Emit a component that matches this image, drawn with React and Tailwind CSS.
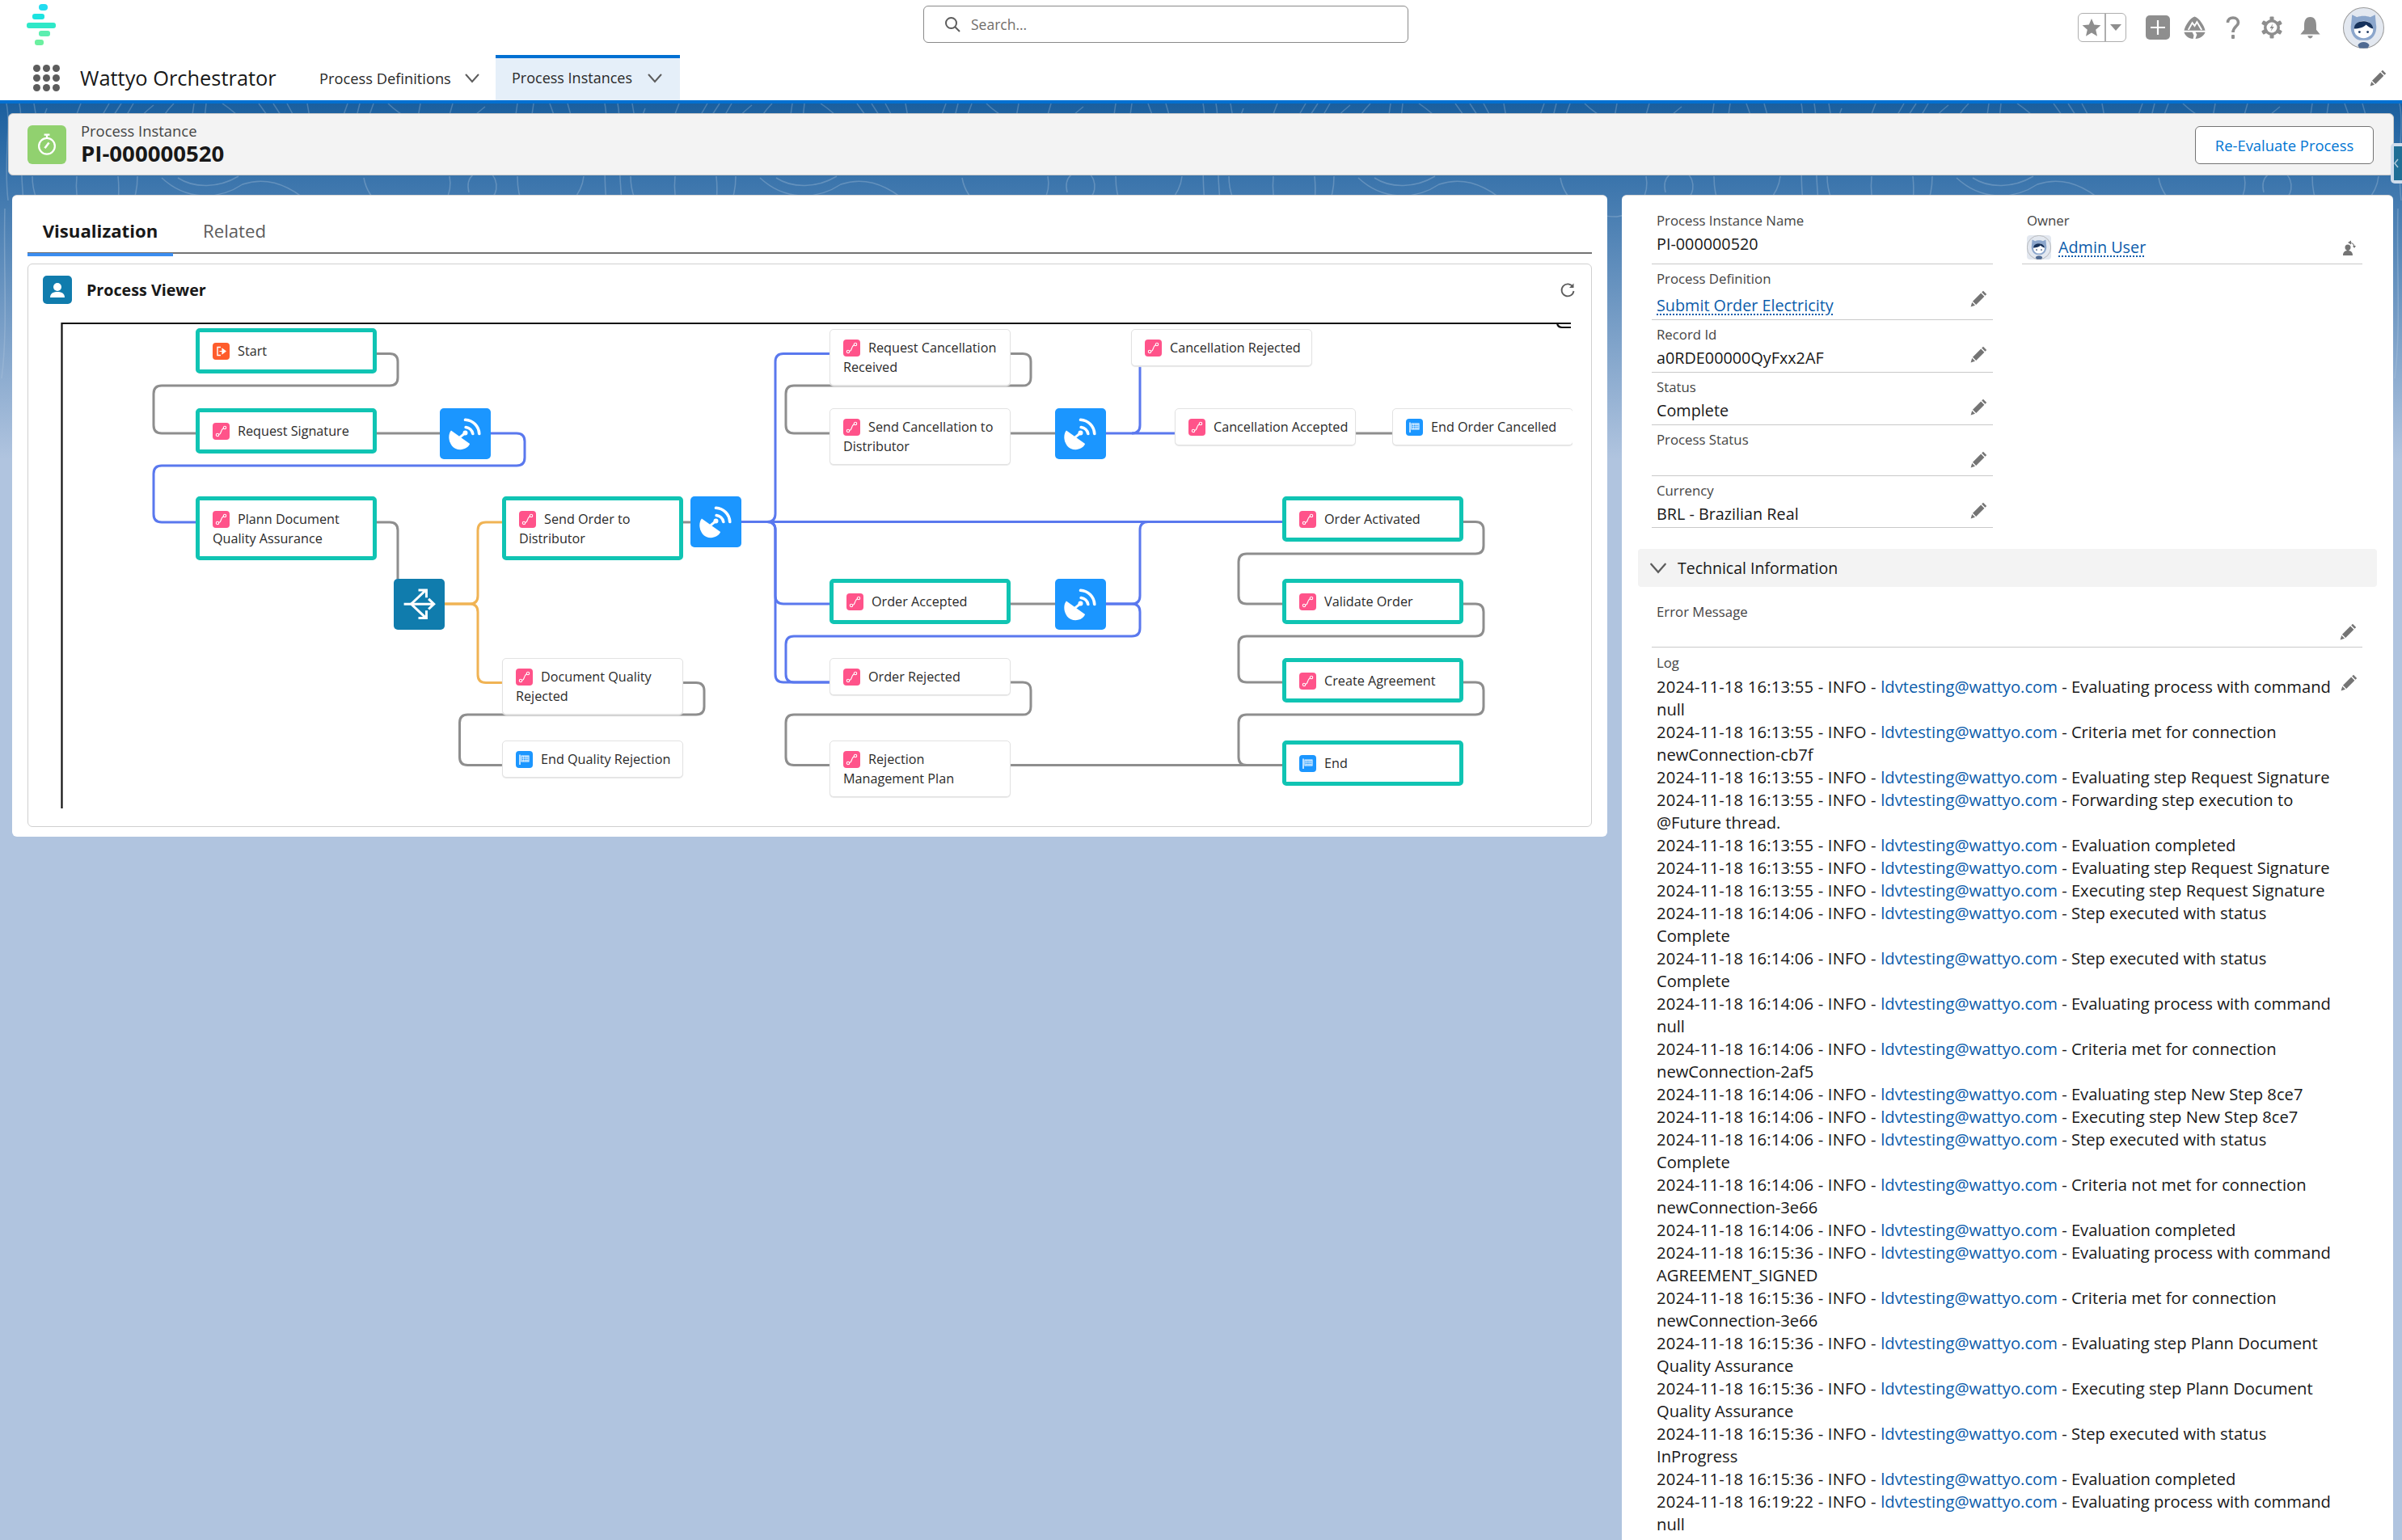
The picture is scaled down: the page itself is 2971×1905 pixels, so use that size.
import React from "react";

const FONT = "font-['Open_Sans','Noto_Sans',sans-serif]";

const nodes = [
  { label: "Start", icon: "start", active: true, cls: "left-[202px] top-[16px] w-[224px] h-[56px]" },
  { label: "Request Signature", icon: "step", active: true, cls: "left-[202px] top-[115px] w-[224px] h-[56px]" },
  { label: "Plann Document\nQuality Assurance", icon: "step", active: true, cls: "left-[202px] top-[224px] w-[224px] h-[79px]" },
  { label: "Send Order to\nDistributor", icon: "step", active: true, cls: "left-[581px] top-[224px] w-[224px] h-[79px]" },
  { label: "Document Quality\nRejected", icon: "step", cls: "left-[581px] top-[424px] w-[224px] h-[70px]" },
  { label: "End Quality Rejection", icon: "end", cls: "left-[581px] top-[526px] w-[224px] h-[46px]" },
  { label: "Request Cancellation\nReceived", icon: "step", cls: "left-[986px] top-[17px] w-[224px] h-[70px]" },
  { label: "Cancellation Rejected", icon: "step", cls: "left-[1359px] top-[17px] w-[224px] h-[46px]" },
  { label: "Send Cancellation to\nDistributor", icon: "step", cls: "left-[986px] top-[115px] w-[224px] h-[70px]" },
  { label: "Cancellation Accepted", icon: "step", cls: "left-[1413px] top-[115px] w-[224px] h-[46px]" },
  { label: "End Order Cancelled", icon: "end", cls: "left-[1682px] top-[115px] w-[224px] h-[46px]" },
  { label: "Order Activated", icon: "step", active: true, cls: "left-[1546px] top-[224px] w-[224px] h-[56px]" },
  { label: "Order Accepted", icon: "step", active: true, cls: "left-[986px] top-[326px] w-[224px] h-[56px]" },
  { label: "Validate Order", icon: "step", active: true, cls: "left-[1546px] top-[326px] w-[224px] h-[56px]" },
  { label: "Order Rejected", icon: "step", cls: "left-[986px] top-[424px] w-[224px] h-[46px]" },
  { label: "Create Agreement", icon: "step", active: true, cls: "left-[1546px] top-[424px] w-[224px] h-[55px]" },
  { label: "Rejection\nManagement Plan", icon: "step", cls: "left-[986px] top-[526px] w-[224px] h-[70px]" },
  { label: "End", icon: "end", active: true, cls: "left-[1546px] top-[526px] w-[224px] h-[56px]" },
];

const satellites = [
  "left-[504px] top-[115px]",
  "left-[814px] top-[224px]",
  "left-[1265px] top-[115px]",
  "left-[1265px] top-[326px]",
];

const gray = [
  "M466 437.5 H482 Q492 437.5 492 447.5 V467 Q492 477 482 477 H200 Q190 477 190 487 V526 Q190 536 200 536 H242",
  "M466 536 H544",
  "M466 646 H482 Q492 646 492 656 V716",
  "M844 646 H854",
  "M844 844.5 H861 Q871 844.5 871 854.5 V874 Q871 884 861 884 H578.5 Q568.5 884 568.5 894 V936.5 Q568.5 946.5 578.5 946.5 H621",
  "M1250 437.5 H1265 Q1275 437.5 1275 447.5 V467 Q1275 477 1265 477 H982 Q972 477 972 487 V526 Q972 536 982 536 H1026",
  "M1250 536 H1305",
  "M1677 536 H1722",
  "M1250 747 H1305",
  "M1250 844 H1265 Q1275 844 1275 854 V874 Q1275 884 1265 884 H982 Q972 884 972 894 V936.5 Q972 946.5 982 946.5 H1026",
  "M1250 946.5 H1586",
  "M1810 645.5 H1825 Q1835 645.5 1835 655.5 V675 Q1835 685 1825 685 H1542 Q1532 685 1532 695 V737 Q1532 747 1542 747 H1586",
  "M1810 747 H1825 Q1835 747 1835 757 V777 Q1835 787 1825 787 H1542 Q1532 787 1532 797 V834 Q1532 844 1542 844 H1586",
  "M1810 844 H1825 Q1835 844 1835 854 V874 Q1835 884 1825 884 H1542 Q1532 884 1532 894 V936.5 Q1532 946.5 1542 946.5 H1586",
];

const blue = [
  "M607 536 H639 Q649 536 649 546 V566 Q649 576 639 576 H200 Q190 576 190 586 V636 Q190 646 200 646 H242",
  "M917 645.5 H1586",
  "M949 645.5 Q959 645.5 959 635.5 V447.5 Q959 437.5 969 437.5 H1026",
  "M949 645.5 Q959 645.5 959 655.5 V737 Q959 747 969 747 H1026",
  "M949 645.5 Q959 645.5 959 655.5 V834 Q959 844 969 844 H1026",
  "M1367 536 H1453",
  "M1400 536 Q1410 536 1410 526 V453",
  "M1367 747 H1400 Q1410 747 1410 737 V655.5 Q1410 645.5 1420 645.5",
  "M1367 747 H1400 Q1410 747 1410 757 V777 Q1410 787 1400 787 H982 Q972 787 972 797 V834 Q972 844 982 844 H1026",
];

const yellow = [
  "M550 747 H581 Q591 747 591 737 V656 Q591 646 601 646 H621",
  "M550 747 H581 Q591 747 591 757 V834.5 Q591 844.5 601 844.5 H621",
];

const logs = [
  ["16:13:55", "Evaluating process with command", "null"],
  ["16:13:55", "Criteria met for connection", "newConnection-cb7f"],
  ["16:13:55", "Evaluating step Request Signature"],
  ["16:13:55", "Forwarding step execution to", "@Future thread."],
  ["16:13:55", "Evaluation completed"],
  ["16:13:55", "Evaluating step Request Signature"],
  ["16:13:55", "Executing step Request Signature"],
  ["16:14:06", "Step executed with status", "Complete"],
  ["16:14:06", "Step executed with status", "Complete"],
  ["16:14:06", "Evaluating process with command", "null"],
  ["16:14:06", "Criteria met for connection", "newConnection-2af5"],
  ["16:14:06", "Evaluating step New Step 8ce7"],
  ["16:14:06", "Executing step New Step 8ce7"],
  ["16:14:06", "Step executed with status", "Complete"],
  ["16:14:06", "Criteria not met for connection", "newConnection-3e66"],
  ["16:14:06", "Evaluation completed"],
  ["16:15:36", "Evaluating process with command", "AGREEMENT_SIGNED"],
  ["16:15:36", "Criteria met for connection", "newConnection-3e66"],
  ["16:15:36", "Evaluating step Plann Document", "Quality Assurance"],
  ["16:15:36", "Executing step Plann Document", "Quality Assurance"],
  ["16:15:36", "Step executed with status", "InProgress"],
  ["16:15:36", "Evaluation completed"],
  ["16:19:22", "Evaluating process with command", "null"],
];

function Pencil({ className = "" }) {
  return (
    <svg viewBox="0 0 21 21" className={`w-[21px] h-[21px] shrink-0 ${className}`}>
      <path d="M16 0.8 L20.2 5 L18.4 6.8 L14.2 2.6 Z M13.2 3.6 L17.4 7.8 L7.2 18 L3 13.8 Z M2.2 15 L6 18.8 L0.6 20.4 Z" fill="#747474" />
    </svg>
  );
}

function Chevron({ className = "", color = "#5c5c5c" }) {
  return (
    <svg viewBox="0 0 18 12" className={`shrink-0 ${className}`}>
      <path d="M1.5 1.5 L9 10 L16.5 1.5" fill="none" stroke={color} strokeWidth="2" strokeLinecap="round" />
    </svg>
  );
}

function SmallIcon({ kind }) {
  if (kind === "start")
    return (
      <span className="inline-block align-[-5px] w-[21px] h-[21px] rounded-[4px] bg-[#fe5c2c] mr-[10px]">
        <svg viewBox="0 0 21 21" className="w-full h-full">
          <path d="M10 5.5 H6 V15.5 H10" fill="none" stroke="#fff" strokeWidth="1.4" />
          <path d="M8.5 10.5 H13 M12 7.5 L16 10.5 L12 13.5 Z" fill="#fff" stroke="#fff" strokeWidth="1.2" />
        </svg>
      </span>
    );
  if (kind === "end")
    return (
      <span className="inline-block align-[-5px] w-[21px] h-[21px] rounded-[4px] bg-[#1b96ff] mr-[10px]">
        <svg viewBox="0 0 21 21" className="w-full h-full">
          <path d="M5 4.5 V17" stroke="#fff" strokeWidth="1.4" />
          <rect x="7" y="6" width="9" height="7" fill="none" stroke="#fff" strokeWidth="1" />
          <path d="M7.5 7.5 H15.5 M7.5 9.5 H15.5 M7.5 11.5 H15.5 M9.5 6 V13 M12 6 V13 M14 6 V13" stroke="#fff" strokeWidth=".6" />
        </svg>
      </span>
    );
  return (
    <span className="inline-block align-[-5px] w-[21px] h-[21px] rounded-[4px] bg-[#ff538a] mr-[10px]">
      <svg viewBox="0 0 21 21" className="w-full h-full">
        <circle cx="6" cy="15" r="1.7" fill="none" stroke="#fff" strokeWidth="1.1" />
        <circle cx="15" cy="6" r="1.7" fill="none" stroke="#fff" strokeWidth="1.1" />
        <path d="M7.8 14.5 C11.5 14 8.8 9.5 13.3 6.8" fill="none" stroke="#fff" strokeWidth="1.2" />
      </svg>
    </span>
  );
}

function Node({ label, icon, active, cls }) {
  return (
    <div
      className={`absolute ${cls} box-border rounded-[5px] bg-white text-[16.2px] leading-[24px] text-[#2a2a2a] whitespace-pre-line ${
        active ? "border-[5px] border-[#10c4b3] pl-[16px] pr-[4px] py-[11px]" : "border border-[#e2e2e2] shadow-[0_1px_1px_#e8e8e8] pl-[16px] pr-[4px] py-[10px]"
      }`}
    >
      <SmallIcon kind={icon} />
      {label}
    </div>
  );
}

function Satellite({ cls }) {
  return (
    <div className={`absolute ${cls} w-[63px] h-[63px] rounded-[5px] bg-[#1b96ff]`}>
      <svg viewBox="0 0 190 190" className="w-full h-full">
        <path d="M42 83 L112 133 C100 160 60 160 45 140 C30 120 32 95 42 83Z" fill="#fff" />
        <path d="M75 108 L95 92" stroke="#fff" strokeWidth="9" />
        <circle cx="95" cy="92" r="9" fill="#fff" />
        <path d="M97 71 A30 30 0 0 1 123 95 M95 43 A55 55 0 0 1 147 95" fill="none" stroke="#fff" strokeWidth="11" strokeLinecap="round" />
      </svg>
    </div>
  );
}

function Decision() {
  return (
    <div className="absolute left-[447px] top-[326px] w-[63px] h-[63px] rounded-[5px] bg-[#107cad]">
      <svg viewBox="0 0 190 190" className="w-full h-full" fill="none" stroke="#fff" strokeWidth="9">
        <path d="M38 94 H148 M130 75 L150 94 L130 113" />
        <path d="M65 94 L120 42 M92 42 H122 V70" />
        <path d="M65 94 L120 146 M122 118 V146 H92" />
      </svg>
    </div>
  );
}

function Avatar({ className = "" }) {
  return (
    <svg viewBox="0 0 50 50" className={className}>
      <circle cx="25" cy="25" r="24.5" fill="#e3e8f0" stroke="#9b9b9b" strokeWidth="1" />
      <path d="M11 9 L17 12 C21 10 29 10 33 12 L39 9 L40 20 C42 28 38 38 30 40 H20 C12 38 8 28 10 20 Z" fill="#8ba6cc" />
      <path d="M18 46 C20 41 30 41 32 46 L30 49.5 H20 Z" fill="#4f6a92" />
      <ellipse cx="25" cy="27" rx="11.5" ry="10.5" fill="#fff" />
      <path d="M13.5 26 C13.5 19 20 16.5 26 17 C32 17.5 36.5 21 36.5 26 C33 25 30 23 28 21 C26 24 19 26 13.5 26Z" fill="#16325c" />
      <circle cx="20" cy="30" r="1.4" fill="#16325c" />
      <circle cx="30" cy="30" r="1.4" fill="#16325c" />
    </svg>
  );
}

function Contours() {
  return (
    <svg className="absolute left-0 top-0 w-full h-[460px] pointer-events-none [mask-image:linear-gradient(to_bottom,black_50%,transparent)]" aria-hidden="true">
      <defs>
        <pattern id="ct" width="740" height="460" patternUnits="userSpaceOnUse">
          <g fill="none" stroke="#fff" strokeOpacity="0.2" strokeWidth="1.5">
            <path d="M8 0 C14 30 4 70 10 120 M24 0 C30 30 22 60 30 130 C34 170 60 200 90 215 M42 0 L46 24 M58 6 L52 22" />
            <path d="M100 0 C96 10 92 20 90 30 M135 0 L120 26 M150 0 L132 28 M165 0 L150 26 M190 2 C180 10 170 20 165 28" />
            <path d="M215 0 C205 10 200 18 196 28 M240 0 L236 28 M255 0 L252 28 M275 0 C290 10 300 20 310 30 M320 0 L340 28 M338 0 L356 28 M355 0 L370 28 M380 0 L385 28" />
            <path d="M430 0 L420 28 M445 0 L438 28 M462 0 L452 28 M480 0 C490 10 500 16 510 22 M520 0 L515 28 M560 0 L552 28 M600 4 C590 12 580 20 575 28" />
            <path d="M640 0 L636 28 M660 0 L656 28 M680 0 L690 28 M702 0 L710 28" />
            <path d="M40 90 C40 130 70 160 110 165 C140 160 150 130 146 90" />
            <path d="M95 90 C92 120 100 150 130 150 C160 150 170 115 170 90" />
            <path d="M200 92 C230 120 270 120 300 100 C330 90 360 100 390 130 L410 150" />
            <path d="M220 92 C240 105 270 105 295 90" />
            <path d="M280 130 L300 138 M320 132 L340 145 M360 145 L380 160" strokeDasharray="14 10" />
            <path d="M450 92 C455 120 480 140 520 140 C550 135 560 110 556 90" />
            <path d="M580 110 C575 90 590 80 605 85 C620 95 615 120 600 120" />
            <path d="M640 90 C640 120 650 140 670 140 C700 140 720 110 722 90" />
            <path d="M6 130 C4 200 10 280 2 340" />
            <path d="M720 140 C730 170 735 240 728 320" />
          </g>
        </pattern>
      </defs>
      <rect width="100%" height="100%" fill="url(#ct)" />
    </svg>
  );
}

function TopIcons() {
  return (
    <div className="flex items-center ml-auto mr-[22px]">
      <div className="flex w-[60px] h-[36px] border-[1.5px] border-[#aeaeae] rounded-[6px] box-border">
        <div className="w-[34px] flex items-center justify-center border-r-2 border-[#aeaeae]">
          <svg viewBox="0 0 24 24" className="w-[24px] h-[24px]">
            <path d="M12 1 L15.2 8.6 L23.4 9.3 L17.2 14.7 L19 22.8 L12 18.5 L5 22.8 L6.8 14.7 L0.6 9.3 L8.8 8.6Z" fill="#8e8e8e" />
          </svg>
        </div>
        <div className="flex-1 flex items-center justify-center">
          <svg viewBox="0 0 14 8" className="w-[14px] h-[8px]">
            <path d="M0 0 H14 L7 8Z" fill="#8e8e8e" />
          </svg>
        </div>
      </div>
      <div className="ml-[24px] w-[30px] h-[30px] rounded-[5px] bg-[#8e8e8e] flex items-center justify-center">
        <svg viewBox="0 0 20 20" className="w-[20px] h-[20px]">
          <path d="M10 1 V19 M1 10 H19" stroke="#fff" strokeWidth="2.2" />
        </svg>
      </div>
      <svg viewBox="0 0 30 30" className="ml-[16px] w-[29px] h-[30px]">
        <path d="M15 1 C21 3 27 12 28.5 19 H1.5 C3 12 9 3 15 1Z" fill="#8e8e8e" />
        <path d="M7 18 L12 9 L15 13 L18 8 L24 18" fill="none" stroke="#fff" strokeWidth="2" />
        <path d="M1.5 21 H12 L14 25 L13 29.5 C7 29 3 26 1.5 21Z M28.5 21 H16 L18 24 L16 29.5 C22 29 27 26 28.5 21Z" fill="#8e8e8e" />
      </svg>
      <svg viewBox="0 0 18 28" className="ml-[24px] w-[18px] h-[28px]">
        <path d="M2.5 8 C2.5 3.5 5.5 2 9 2 C13 2 15.5 4.5 15.5 8 C15.5 12.5 9 13 9 20" fill="none" stroke="#8e8e8e" strokeWidth="3.6" />
        <rect x="7" y="23" width="4" height="5" rx="1" fill="#8e8e8e" />
      </svg>
      <svg viewBox="0 0 26 28" className="ml-[26px] w-[26px] h-[28px]">
        <g fill="#8e8e8e">
          <rect x="10.5" y="0.5" width="5" height="27" rx="1" />
          <rect x="10.5" y="0.5" width="5" height="27" rx="1" transform="rotate(60 13 14)" />
          <rect x="10.5" y="0.5" width="5" height="27" rx="1" transform="rotate(120 13 14)" />
          <circle cx="13" cy="14" r="10" />
        </g>
        <circle cx="13" cy="14" r="6.5" fill="#fff" />
        <path d="M14.5 9 L10.5 15 H13 L11.5 19 L15.8 13 H13.2Z" fill="#8e8e8e" />
      </svg>
      <svg viewBox="0 0 30 30" className="ml-[20px] w-[29px] h-[28px]">
        <path d="M15 1 C9 1 7 6 7 12 V18 L2 24 H28 L23 18 V12 C23 6 21 1 15 1Z M11.5 26 H18.5 C18 28.5 16 29.5 15 29.5 C14 29.5 12 28.5 11.5 26Z" fill="#8e8e8e" />
      </svg>
      <Avatar className="ml-[26px] w-[51px] h-[51px]" />
    </div>
  );
}

function Field({ label, value, link, pencil = true, h, mt = "mt-[4px]" }) {
  return (
    <div className={`flex border-b border-[#c9c9c9] ${h} box-border`}>
      <div className="flex-1 pl-[6px] pt-[7px]">
        <div className="text-[16.8px] leading-[22px] text-[#444]">{label}</div>
        {value && (
          <div className={`${mt} text-[19.8px] leading-[28px] ${link ? "text-[#0b5cab] underline decoration-dotted decoration-[1.5px] underline-offset-[3px]" : "text-[#181818]"}`}>
            {value}
          </div>
        )}
      </div>
      {pencil && <Pencil className="mt-[32px] mr-[7px]" />}
    </div>
  );
}

export default function App() {
  return (
    <div className={`relative w-[2971px] h-[1905px] overflow-hidden flex flex-col bg-white ${FONT}`}>
      {/* global header */}
      <header className="h-[68px] flex items-center relative shrink-0">
        <div className="ml-[33px] w-[36px] h-[52px] mt-[-6px] flex flex-col">
          <div className="ml-[15px] w-[11px] h-[8px] rounded-[4px] bg-[#22dcf0]" />
          <div className="ml-[7px] mt-[4px] w-[15px] h-[7px] rounded-[3px] bg-[#1de3e0]" />
          <div className="mt-[4px] w-[36px] h-[7px] rounded-[3px] bg-[#2fe8c8]" />
          <div className="ml-[15px] mt-[3px] w-[14px] h-[7px] rounded-[3px] bg-[#5ceeb0]" />
          <div className="ml-[10px] mt-[4px] w-[11px] h-[7px] rounded-[3px] bg-[#6bf0a0]" />
        </div>
        <div className="ml-[1073px] mt-[-8px] w-[600px] h-[46px] box-border border border-[#8a8a8a] rounded-[6px] flex items-center pl-[25px]">
          <svg viewBox="0 0 20 20" className="w-[20px] h-[20px]">
            <circle cx="8.5" cy="8.5" r="6.5" fill="none" stroke="#5c5c5c" strokeWidth="2" />
            <path d="M13 13 L19 19" stroke="#5c5c5c" strokeWidth="2" />
          </svg>
          <span className="ml-[13px] text-[17.5px] text-[#706e6b]">Search...</span>
        </div>
        <TopIcons />
      </header>

      {/* app nav */}
      <nav className="h-[56px] flex items-center shrink-0 relative">
        <div className="ml-[41px] grid grid-cols-3 gap-[3px] w-[33px]">
          {[0, 1, 2, 3, 4, 5, 6, 7, 8].map((i) => (
            <span key={i} className="w-[9px] h-[9px] rounded-full bg-[#5c5c5c]" />
          ))}
        </div>
        <div className="ml-[25px] text-[25.4px] text-[#181818] w-[296px]">Wattyo Orchestrator</div>
        <div className="flex items-center text-[18.3px] text-[#2a2a2a] w-[218px] mt-[1px]">
          <span>Process Definitions</span>
          <Chevron className="ml-[17px] w-[18px] h-[12px]" />
        </div>
        <div className="relative w-[228px] h-[56px] bg-[#e5eff9] border-t-4 border-[#0070d2] box-border flex items-center pl-[20px] text-[18px] text-[#2a2a2a]">
          <span className="mt-[-3px]">Process Instances</span>
          <Chevron className="ml-[19px] mt-[-3px] w-[18px] h-[12px]" />
        </div>
        <Pencil className="ml-auto mr-[19px]" />
      </nav>
      <div className="h-[4px] bg-[#0070d2] shrink-0" />

      {/* page body */}
      <main className="relative flex-1 bg-[linear-gradient(to_bottom,#1b5f9e_0px,#b0c4df_440px)] px-[10px] pt-[12px] min-h-0">
        <Contours />
        <div className="relative h-[77px] bg-[#f3f3f3] border border-[#c9c9c9] rounded-[6px] flex items-center pl-[23px] pr-[24px]">
          <div className="w-[48px] h-[48px] rounded-[6px] bg-[#91d16f] flex items-center justify-center">
            <svg viewBox="0 0 28 32" className="w-[24px] h-[28px]" fill="none" stroke="#fff" strokeWidth="2.6">
              <path d="M10 1.5 H18 M14 1.5 V6" />
              <circle cx="14" cy="18" r="11.5" />
              <path d="M11 21 L17 13" strokeWidth="3" />
            </svg>
          </div>
          <div className="ml-[18px] -mt-[3px]">
            <div className="text-[18.4px] leading-[24px] text-[#444]">Process Instance</div>
            <div className="text-[27.6px] leading-[30px] font-bold text-[#181818]">PI-000000520</div>
          </div>
          <button className="ml-auto mt-[2px] w-[221px] h-[47px] bg-white border border-[#747474] rounded-[6px] text-[18.4px] text-[#0176d3]">
            Re-Evaluate Process
          </button>
        </div>

        <div className="absolute right-0 top-[49px] w-[14px] h-[50px] bg-[#cfdcec] rounded-l-[5px] pl-[4px] py-[4px]">
          <div className="w-full h-full bg-[#1f6e96] flex items-center">
            <svg viewBox="0 0 6 12" className="w-[6px] h-[12px]">
              <path d="M5 1 L1 6 L5 11" fill="none" stroke="#a9c7d8" strokeWidth="1.6" />
            </svg>
          </div>
        </div>

        <div className="relative flex mt-[24px] items-start">
          {/* left column */}
          <section className="ml-[5px] w-[1973px] h-[794px] bg-white rounded-[6px] border-t border-[#d8d8d8] px-[19px] box-border">
            <div className="h-[72px] pt-[16px] box-border flex border-b-2 border-[#747474] text-[22.2px]">
              <div className="w-[180px] h-[55px] border-b-4 border-[#3b8df0] box-content flex items-center justify-center font-bold text-[#181818] -mb-[2px]">
                Visualization
              </div>
              <div className="ml-[37px] h-[56px] flex items-center text-[#5c5c5c]">Related</div>
            </div>
            <div className="mt-[12px] w-[1935px] h-[697px] border border-[#d0d0d0] rounded-[6px] box-border">
              <div className="h-[63px] flex items-center pl-[18px] pr-[19px]">
                <div className="w-[36px] h-[35px] rounded-[5px] bg-[#107cad] flex items-center justify-center">
                  <svg viewBox="0 0 24 24" className="w-[24px] h-[24px]">
                    <circle cx="12" cy="8" r="5" fill="#fff" />
                    <path d="M3 21 C3 15 8 14 12 14 C16 14 21 15 21 21Z" fill="#fff" />
                  </svg>
                </div>
                <div className="ml-[18px] text-[19.7px] font-bold text-[#181818]">Process Viewer</div>
                <svg viewBox="0 0 20 20" className="ml-auto w-[20px] h-[20px]" fill="none" stroke="#5c5c5c" strokeWidth="1.8">
                  <path d="M16.5 6 A7.5 7.5 0 1 0 17.5 11" />
                  <path d="M17.5 1.5 V7 H12" fill="#5c5c5c" stroke="none" />
                </svg>
              </div>
              <div className="relative ml-[5px] w-[1905px] h-[610px] overflow-hidden">
                <svg viewBox="40 390 1905 610" className="absolute inset-0 w-full h-full" fill="none">
                  <path d="M76.5 1000 V400 H1943 M1926 400 Q1927 405 1932 405 H1943" stroke="#111" strokeWidth="2.2" />
                  {gray.map((d) => (
                    <path key={d} d={d} stroke="#8e8e8e" strokeWidth="3" />
                  ))}
                  {yellow.map((d) => (
                    <path key={d} d={d} stroke="#f0b354" strokeWidth="3" />
                  ))}
                  {blue.map((d) => (
                    <path key={d} d={d} stroke="#5a78ee" strokeWidth="3" />
                  ))}
                </svg>
                {nodes.map((n) => (
                  <Node key={n.label} {...n} />
                ))}
                {satellites.map((s) => (
                  <Satellite key={s} cls={s} />
                ))}
                <Decision />
              </div>
            </div>
          </section>

          {/* right column */}
          <aside className="ml-[18px] w-[954px] h-[1700px] bg-white rounded-[6px] border-t border-[#d8d8d8] pl-[37px] pr-[38px] pt-[13px] box-border">
            <div className="grid grid-cols-[422px_421px] gap-x-[36px]">
              <div>
                <Field h="h-[72px]" label="Process Instance Name" value="PI-000000520" pencil={false} />
                <Field h="h-[69px]" label="Process Definition" value="Submit Order Electricity" link mt="mt-[8px]" />
                <Field h="h-[65px]" label="Record Id" value="a0RDE00000QyFxx2AF" />
                <Field h="h-[65px]" label="Status" value="Complete" />
                <Field h="h-[63px]" label="Process Status" />
                <Field h="h-[64px]" label="Currency" value="BRL - Brazilian Real" />
              </div>
              <div className="h-[72px] border-b border-[#c9c9c9] box-border flex">
                <div className="flex-1 pl-[6px] pt-[7px]">
                  <div className="text-[16.8px] leading-[22px] text-[#444]">Owner</div>
                  <div className="flex items-center mt-[7px]">
                    <div className="w-[30px] h-[30px] rounded-[4px] bg-[#e3e8f0] overflow-hidden">
                      <Avatar className="w-[30px] h-[30px]" />
                    </div>
                    <span className="ml-[9px] text-[19.8px] leading-[24px] text-[#0b5cab] underline decoration-dotted decoration-[1.5px] underline-offset-[3px]">Admin User</span>
                  </div>
                </div>
                <svg viewBox="0 0 18 20" className="mt-[42px] mr-[7px] w-[18px] h-[20px]">
                  <circle cx="7" cy="9" r="3.5" fill="#747474" />
                  <path d="M1 19 C1 14 4 13 7 13 C10 13 13 14 13 19Z M5.5 10 H8.5 V15 H5.5Z" fill="#747474" />
                  <path d="M9 3 A6 6 0 0 1 15 8" fill="none" stroke="#747474" strokeWidth="1.2" />
                  <path d="M7 3 L11 0.5 V5.5Z M13 7 H17 L15 10Z" fill="#747474" />
                </svg>
              </div>
            </div>

            <div className="mt-[26px] -ml-[17px] -mr-[18px] h-[47px] bg-[#f3f3f3] rounded-[4px] flex items-center pl-[14px]">
              <Chevron className="w-[22px] h-[14px]" />
              <span className="ml-[13px] text-[19.5px] text-[#181818]">Technical Information</span>
            </div>

            <div className="mt-[13px]">
              <Field h="h-[62px]" label="Error Message" />
              <div className="flex pt-[8px]">
                <div className="flex-1 pl-[6px]">
                  <div className="text-[16.8px] leading-[22px] text-[#444]">Log</div>
                  <div className="mt-[4px] text-[20.2px] leading-[28px] text-[#181818] whitespace-nowrap">
                    {logs.map(([time, msg, more], i) => (
                      <div key={i}>
                        <div>
                          <span className="tracking-[0.2px]">2024-11-18 {time} - INFO - </span>
                          <span className="text-[#0b5cab]">ldvtesting@wattyo.com</span> - {msg}
                        </div>
                        {more && <div>{more}</div>}
                      </div>
                    ))}
                  </div>
                </div>
                <Pencil className="mt-[25px] mr-[6px]" />
              </div>
            </div>
          </aside>
        </div>
      </main>
    </div>
  );
}
